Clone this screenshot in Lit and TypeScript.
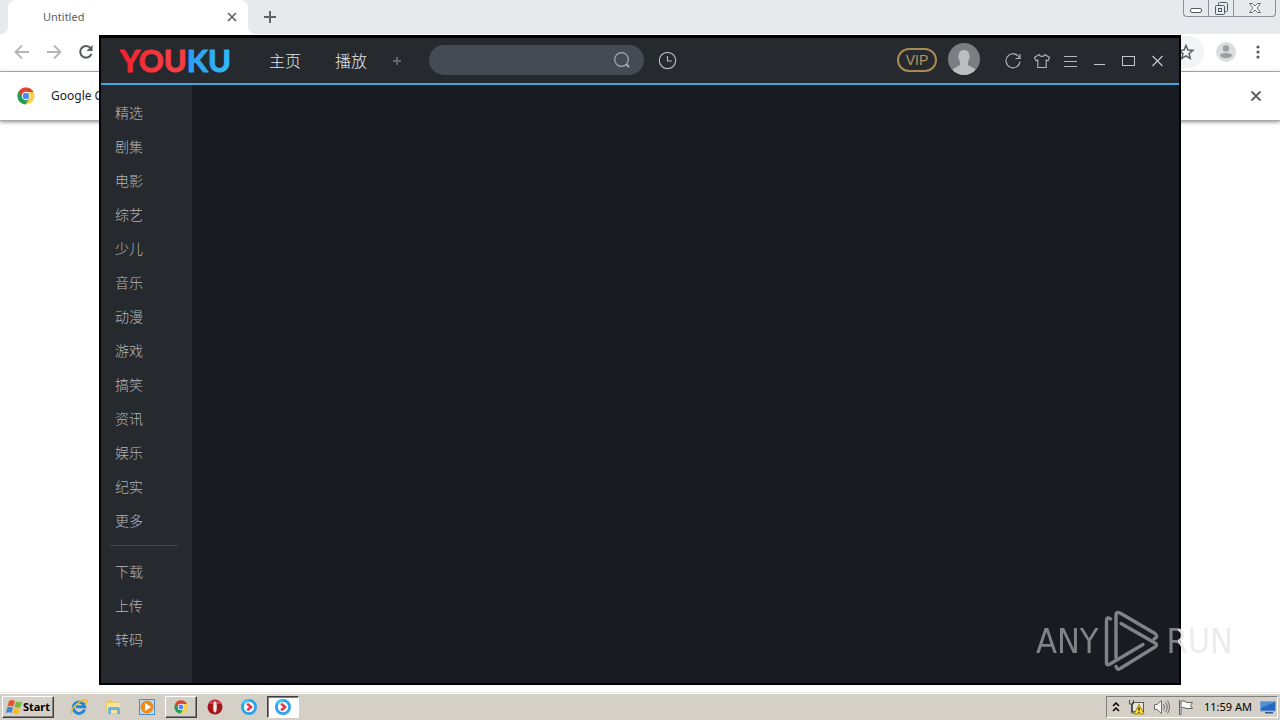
import { LitElement, html, css, svg } from "lit";
import { customElement } from "lit/decorators.js";

const channels = ["精选", "剧集", "电影", "综艺", "少儿", "音乐", "动漫", "游戏", "搞笑", "资讯", "娱乐", "纪实", "更多"];
const tools = ["下载", "上传", "转码"];

const base = css`
  * { box-sizing: border-box; }
  button, input { font: inherit; color: inherit; margin: 0; padding: 0; border: 0; background: none; outline: none; }
  button { display: flex; align-items: center; justify-content: center; flex: none; }
  svg { display: block; flex: none; overflow: visible; }
`;

const chromeBall = svg`
  <circle cx="9" cy="9" r="8.5" fill="#fbcf45" />
  <path d="M9 9 L1.6 4.8 A8.5 8.5 0 0 0 8.2 17.5 L12.6 11.2 Z" fill="#1c9d58" />
  <path d="M1.6 4.8 A8.5 8.5 0 0 1 16.6 5.1 L9 5.1 L5.5 11 Z" fill="#dc4437" />
  <circle cx="9" cy="9" r="4.2" fill="#fff" />
  <circle cx="9" cy="9" r="3.2" fill="#4a87ee" />`;

const playBall = svg`
  <circle cx="9" cy="9" r="6.6" fill="#f4fbff" stroke="#2aa3ec" stroke-width="2.8" />
  <path d="M3 5.4 A7 7 0 0 1 9 2" fill="none" stroke="#45c8f5" stroke-width="2.6" />
  <path d="M7.2 5.6 L11 9 L7.2 12.4" fill="none" stroke="#f0323c" stroke-width="2.6" />`;

@customElement("browser-window")
class BrowserWindow extends LitElement {
  static styles = [base, css`
    :host { display: flex; flex-direction: column; background: #fff; font: 12px/16px "Noto Sans", sans-serif; color: #3c4043; min-height: 0; }
    .strip { display: flex; height: 34px; background: #e7eaed; align-items: flex-start; padding: 0 4px 0 8px; }
    .tab { display: flex; align-items: center; width: 240px; height: 34px; background: #fff; border-radius: 8px 8px 0 0; padding: 0 9px 0 35px; position: relative; }
    .tab::before, .tab::after { content: ""; position: absolute; bottom: 0; width: 8px; height: 8px; }
    .tab::before { left: -8px; background: radial-gradient(circle at 0 0, #e7eaed 8px, #fff 8px); }
    .tab::after { right: -8px; background: radial-gradient(circle at 100% 0, #e7eaed 8px, #fff 8px); }
    .title { flex: 1; font-size: 11px; color: #5a5e63; }
    .add { width: 44px; height: 34px; }
    .space { flex: 1; }
    .frame { display: flex; height: 17px; border: 1px solid #8b9096; border-top: 0; border-radius: 0 0 4px 4px; }
    .frame button { width: 25px; height: 16px; border-right: 1px solid #8b9096; }
    .frame .shut { width: 41px; border-right: 0; }
    .bar { display: flex; align-items: center; height: 38px; border-bottom: 1px solid #b4b6b8; padding: 0 14px 2px 14px; gap: 16px; }
    .address { display: flex; flex: 1; height: 32px; background: #f1f3f4; border-radius: 16px; align-items: center; padding: 0 10px 0 16px; margin-right: -4px; }
    .address input { flex: 1; min-width: 0; }
    .trail { display: flex; align-items: center; gap: 14px; }
    .info { display: flex; align-items: center; height: 49px; padding: 0 18px 0 17px; border-bottom: 1px solid #a9a9a9; box-shadow: 0 1px 4px #0007; color: #202124; gap: 16px; }
    .info span { flex: 1; }
  `];

  render() {
    return html`
      <div class="strip">
        <div class="tab">
          <span class="title">Untitled</span>
          <button aria-label="Close tab"><svg width="14" height="14"><path d="M3 3 L11 11 M11 3 L3 11" stroke="#5f6368" stroke-width="1.7" /></svg></button>
        </div>
        <button class="add" aria-label="New tab"><svg width="12" height="12"><path d="M6 0 V12 M0 6 H12" stroke="#5f6368" stroke-width="2" /></svg></button>
        <div class="space"></div>
        <div class="frame">
          <button aria-label="Minimize"><svg width="13" height="14"><rect x="0.5" y="7.5" width="11" height="4" rx="1.5" fill="#fff" stroke="#555b62" /></svg></button>
          <button aria-label="Restore"><svg width="13" height="13" fill="#e7eaed" stroke="#555b62"><rect x="3.5" y="0.5" width="9" height="9" rx="1" /><rect x="0.5" y="3.5" width="9" height="9" rx="1" /><rect x="3.5" y="6.5" width="3" height="3" /></svg></button>
          <button class="shut" aria-label="Close"><svg width="12" height="10"><path d="M0.5 0.5 H3.5 L6 3 L8.5 0.5 H11.5 L8 5 L11.5 9.5 H8.5 L6 7 L3.5 9.5 H0.5 L4 5 Z" fill="#fff" stroke="#666c73" /></svg></button>
        </div>
      </div>
      <div class="bar">
        <button aria-label="Back"><svg width="16" height="16"><path d="M15 8 H2 M8 1.5 L1.5 8 L8 14.5" fill="none" stroke="#b3b5b7" stroke-width="1.8" /></svg></button>
        <button aria-label="Forward"><svg width="16" height="16"><path d="M1 8 H14 M8 1.5 L14.5 8 L8 14.5" fill="none" stroke="#b3b5b7" stroke-width="1.8" /></svg></button>
        <button aria-label="Reload"><svg width="16" height="16"><path d="M12.6 4.2 A5.8 5.8 0 1 0 13.5 9.8" fill="none" stroke="#5a5d61" stroke-width="2" /><path d="M14.5 1 V7 H8.5 Z" fill="#5a5d61" /></svg></button>
        <div class="address">
          <input aria-label="Address" />
          <button aria-label="Bookmark"><svg width="16" height="16"><path d="M8 1.5 L9.9 6 L14.8 6.4 L11.1 9.6 L12.2 14.4 L8 11.8 L3.8 14.4 L4.9 9.6 L1.2 6.4 L6.1 6 Z" fill="none" stroke="#5a5d61" stroke-width="1.5" /></svg></button>
        </div>
        <div class="trail">
          <button aria-label="Profile"><svg width="20" height="20"><circle cx="10" cy="10" r="10" fill="#dcdddf" /><circle cx="10" cy="6.5" r="3.2" fill="#9b9da0" /><path d="M4 13.8 C4 10 16 10 16 13.8 C14 17 6 17 4 13.8" fill="#9b9da0" /></svg></button>
          <button aria-label="Menu"><svg width="16" height="16" fill="#5a5d61"><circle cx="8" cy="3" r="1.6" /><circle cx="8" cy="8" r="1.6" /><circle cx="8" cy="13" r="1.6" /></svg></button>
        </div>
      </div>
      <div class="info">
        <svg width="18" height="18">${chromeBall}</svg>
        <span>Google Chrome</span>
        <button aria-label="Dismiss"><svg width="12" height="12"><path d="M1.5 1.5 L10.5 10.5 M10.5 1.5 L1.5 10.5" stroke="#5f6368" stroke-width="2" /></svg></button>
      </div>`;
  }
}

@customElement("youku-window")
class YoukuWindow extends LitElement {
  static styles = [base, css`
    :host { display: flex; flex-direction: column; background: #181b21; border: solid #000; border-width: 3px 2px 2px; font: 14px/20px "Noto Sans CJK SC", sans-serif; font-weight: 300; }
    header { display: flex; align-items: center; height: 47px; background: #262a2f; border-bottom: 2px solid #43a5e0; padding: 0 12px 2px 18px; flex: none; }
    .logo { width: 116px; height: 30px; margin-right: 34px; }
    .logo text { font: 700 31px "Lato", sans-serif; stroke-width: 1px; stroke-linejoin: round; }
    nav { display: flex; align-items: center; gap: 34px; font-size: 16px; color: #e4e6e8; margin-right: 26px; }
    .plus { padding-top: 2px; margin-right: 28px; }
    .search { display: flex; align-items: center; width: 215px; height: 30px; border-radius: 15px; background: #464a52; padding: 0 14px 0 16px; margin-right: 15px; }
    .search input { flex: 1; min-width: 0; }
    .space { flex: 1; }
    .vip { width: 40px; height: 24px; border: 2px solid #a98a50; border-radius: 12px; color: #b8965a; font: 14px/20px "Liberation Sans", sans-serif; margin-right: 11px; }
    .face { margin-right: 24px; }
    .window { display: flex; gap: 11px; padding-top: 2px; }
    .body { display: flex; flex: 1; min-height: 0; }
    aside { width: 91px; background: #262a2f; padding: 10px 14px 0 9px; color: #b4b7ba; overflow: hidden; }
    aside button { height: 34px; padding-left: 5px; }
    hr { border: 0; border-top: 1px solid #42464c; margin: 8px 0; }
  `];

  render() {
    return html`
      <header>
        <svg class="logo" role="img" aria-label="YOUKU">
          <defs>
            <linearGradient id="red"><stop offset="0" stop-color="#f3202c" /><stop offset="0.5" stop-color="#f54248" /><stop offset="1" stop-color="#e01a20" /></linearGradient>
            <linearGradient id="blue"><stop offset="0" stop-color="#1673d8" /><stop offset="0.6" stop-color="#2c9df0" /><stop offset="1" stop-color="#30bdf5" /></linearGradient>
          </defs>
          <text x="1" y="27"><tspan fill="url(#red)" stroke="url(#red)">YOU</tspan><tspan fill="url(#blue)" stroke="url(#blue)">KU</tspan></text>
        </svg>
        <nav><button>主页</button><button>播放</button></nav>
        <button class="plus" aria-label="Add"><svg width="8" height="8"><path d="M4 0 V8 M0 4 H8" stroke="#62666b" stroke-width="2" /></svg></button>
        <div class="search">
          <input aria-label="Search" />
          <button aria-label="Search"><svg width="16" height="16" fill="none" stroke="#a9acb1" stroke-width="1.2"><circle cx="7.5" cy="7.5" r="6.8" /><path d="M12 12 L15 15" stroke-width="1.8" /></svg></button>
        </div>
        <button aria-label="History"><svg width="18" height="18" fill="none" stroke="#b4b7ba" stroke-width="1.2"><circle cx="8.5" cy="9.5" r="8.2" /><path d="M8.5 5 V10 H13" /></svg></button>
        <div class="space"></div>
        <button class="vip">VIP</button>
        <button class="face" aria-label="Account"><svg width="32" height="34"><clipPath id="disc"><circle cx="16" cy="16" r="16" /></clipPath><g clip-path="url(#disc)"><rect width="32" height="32" fill="#7b7d80" /><path d="M16 7 C9.5 7 9.5 15 12 19 V22 L5 26 V32 H27 V26 L20 22 V19 C22.5 15 22.5 7 16 7" fill="#bcbdbf" /></g></svg></button>
        <div class="window">
          <button aria-label="Refresh"><svg width="18" height="18" fill="none" stroke="#b4b7ba" stroke-width="1.1"><path d="M15.2 5.5 A7 7 0 1 0 16 9.5 M16 2 V6.5 H11.5" /></svg></button>
          <button aria-label="Skin"><svg width="18" height="18" fill="none" stroke="#b4b7ba" stroke-width="1.1"><path d="M6 2.5 C7 5 11 5 12 2.5 L16.5 5.5 L15 8.8 L13.2 8 V15.5 H4.8 V8 L3 8.8 L1.5 5.5 Z" /></svg></button>
          <button aria-label="Menu"><svg width="18" height="18" stroke="#b4b7ba"><path d="M2 4.5 H15 M2 9.5 H15 M2 14.5 H15" /></svg></button>
          <button aria-label="Minimize"><svg width="18" height="18" stroke="#c4c6c8"><path d="M3 12.5 H14" /></svg></button>
          <button aria-label="Maximize"><svg width="18" height="18" fill="none" stroke="#c4c6c8"><rect x="2.5" y="4.5" width="12" height="9" /></svg></button>
          <button aria-label="Close"><svg width="18" height="18" stroke="#c4c6c8" stroke-width="1.2"><path d="M3.5 4 L13.5 14 M13.5 4 L3.5 14" /></svg></button>
        </div>
      </header>
      <div class="body">
        <aside>
          ${channels.map((name) => html`<button>${name}</button>`)}
          <hr />
          ${tools.map((name) => html`<button>${name}</button>`)}
        </aside>
      </div>`;
  }
}

@customElement("task-bar")
class TaskBar extends LitElement {
  static styles = [base, css`
    :host { display: flex; align-items: center; height: 28px; background: #d4d0c8; border-top: 1px solid #e9e7e3; box-shadow: inset 0 1px #fff; padding: 0 2px; font: 11px/16px "Noto Sans", sans-serif; color: #000; }
    .start, .app { height: 22px; border: 1px solid transparent; }
    .start, .raised { border-color: #fff #404040 #404040 #fff; box-shadow: inset -1px -1px #808080; }
    .start { width: 52px; font-weight: 700; margin-right: 9px; }
    .app { width: 32px; margin-right: 2px; }
    .pressed { background: #fff; border-color: #404040 #fff #fff #404040; box-shadow: inset 1px 1px #808080; }
    .space { flex: 1; }
    .tray { display: flex; align-items: center; height: 22px; border: 1px solid; border-color: #808080 #fff #fff #808080; padding: 0 1px 0 5px; gap: 8px; }
    time { margin-left: 2px; }
  `];

  render() {
    return html`
      <button class="start">
        <svg width="17" height="16"><path d="M3 2 Q6 0 9 2 L7.5 7.5 Q4.5 6 1.5 7.5 Z" fill="#e9562c" /><path d="M10 2.5 Q13 4 16 2.5 L14.5 8 Q11.5 9.5 8.5 8 Z" fill="#75b93b" /><path d="M1.2 8.5 Q4 7 7 8.5 L5.5 14 Q3 12.5 0 14 Z" fill="#3c88d4" /><path d="M8.2 9 Q11 10.5 14.2 9 L12.5 14.5 Q10 16 6.7 14.5 Z" fill="#f6bd25" /></svg>
        Start
      </button>
      <button class="app" aria-label="Internet Explorer"><svg width="18" height="18" fill="none"><path d="M14.5 11.5 A5.7 5.7 0 1 1 14.7 8.7 H6" stroke="#2387d5" stroke-width="3" /><path d="M2 16 C-1 12 10 1 16 2 C18 3 16 6 15 7" stroke="#e9b92d" stroke-width="1.5" /></svg></button>
      <button class="app" aria-label="Explorer"><svg width="18" height="18"><path d="M2 3 L7 2 L8 4 H14 V14 H2 Z" fill="#e8c965" /><path d="M3 5 H16 V15 H3 Z" fill="#f8e49c" /><path d="M4 16 V11 Q4 9 6 9 H14 Q16 9 16 11 V16 H13 V12 H7 V16 Z" fill="#65b4e5" /></svg></button>
      <button class="app" aria-label="Media Player"><svg width="18" height="18"><rect x="1.5" y="1.5" width="15" height="15" fill="#b9dcf5" stroke="#4d8ec8" /><circle cx="9" cy="9" r="6.5" fill="#f08a1d" /><path d="M7 5 L13 9 L7 13 Z" fill="#fff" /></svg></button>
      <button class="app raised" aria-label="Chrome"><svg width="14" height="14" viewBox="0 0 18 18">${chromeBall}</svg></button>
      <button class="app" aria-label="Opera"><svg width="18" height="18"><circle cx="9" cy="9" r="7.5" fill="#a5141b" /><path d="M2.5 6 A7.5 7.5 0 0 1 15.5 6" fill="#d2434a" /><ellipse cx="9" cy="9" rx="1.8" ry="5.5" fill="#f3e6e4" /></svg></button>
      <button class="app" aria-label="Youku"><svg width="18" height="18">${playBall}</svg></button>
      <button class="app pressed" aria-label="Youku window"><svg width="18" height="18">${playBall}</svg></button>
      <div class="space"></div>
      <div class="tray">
        <svg width="8" height="12" fill="none" stroke="#000" stroke-width="1.5"><path d="M1 5 L4 2 L7 5 M1 10 L4 7 L7 10" /></svg>
        <svg width="17" height="16"><rect x="4.5" y="3.5" width="11" height="9" fill="#e8e6df" stroke="#55585a" /><path d="M1.5 1 V5 H5.5 V1 M3.5 5 V14 H8" fill="none" stroke="#4c4c4c" /><path d="M11 5.5 L16 15 H6 Z" fill="#ffe02e" stroke="#a68500" /><path d="M11 8.5 V11.5 M11 12.8 V14" stroke="#222" stroke-width="1.4" /></svg>
        <svg width="17" height="16" fill="#f6f6f6" stroke="#6b6d6f"><path d="M1.5 5.5 H4 L8.5 1.5 V14.5 L4 10.5 H1.5 Z" /><path d="M10.5 5 Q12.5 8 10.5 11 M12.5 3 Q16 8 12.5 13 M14.5 1.5 Q18.5 8 14.5 14.5" fill="none" /></svg>
        <svg width="16" height="16" fill="#fafafa" stroke="#5e6062"><path d="M1.5 1 V15.5 H3 V9.5 M3 2 Q6 1 9 3.5 H14.5 L12.5 6.5 L14.5 9.5 H8 Q6 7.5 3 9 Z" /></svg>
        <time>11:59 AM</time>
        <svg width="16" height="16"><path d="M0.5 2.5 H15.5 V12 H0.5 Z" fill="#2868be" stroke="#7da4d4" /><path d="M1 3 H15 L1 9 Z" fill="#5192dc" /><path d="M5 13 H13 V14.5 H5 Z" fill="#31559a" /></svg>
      </div>`;
  }
}

@customElement("app-root")
class AppRoot extends LitElement {
  static styles = [base, css`
    :host { display: flex; flex-direction: column; height: 100vh; position: relative; overflow: hidden; }
    .browser { flex: 1; }
    .player { position: absolute; inset: 35px 99px 35px 99px; }
    .mark { position: absolute; right: 47px; bottom: 48px; display: flex; align-items: center; gap: 6px; color: #8d8f92; font: 34px/62px "DejaVu Sans Condensed", sans-serif; opacity: 0.9; }
    .fade { background: linear-gradient(90deg, #8d8f92 12px, #e9e9ea 12px); -webkit-background-clip: text; background-clip: text; color: transparent; }
  `];

  render() {
    return html`
      <browser-window class="browser"></browser-window>
      <youku-window class="player"></youku-window>
      <div class="mark">
        <span>ANY</span>
        <svg width="56" height="62" fill="none" stroke="#8d8f92" stroke-width="3.4" stroke-linejoin="round" stroke-linecap="round">
          <path d="M6.5 9 Q2.5 6 2.5 11 V53 Q2.5 56 6 54 L39 34.5" />
          <path d="M12 48 V5 Q12 1 16 3 L51 23.5 Q55 26.5 50 29" />
          <path d="M17 13.5 L51 33 Q54 35 51 37 L17 58 Q13 61 12 56.5" />
        </svg>
        <span class="fade">RUN</span>
      </div>
      <task-bar></task-bar>`;
  }
}
